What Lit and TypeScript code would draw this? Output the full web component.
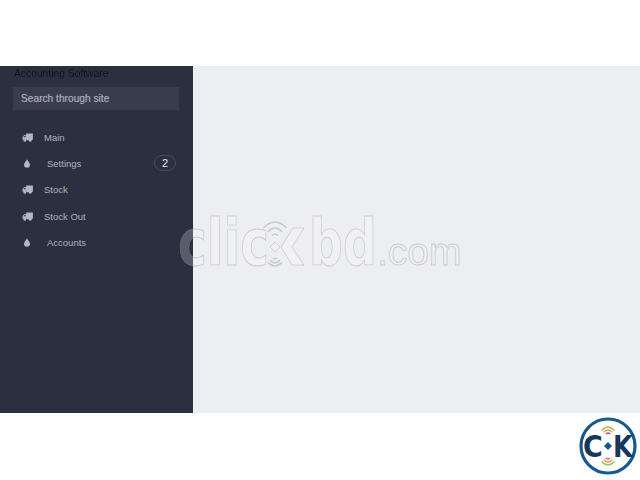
import { LitElement, html, css, svg } from 'lit'
import { customElement } from 'lit/decorators.js'

const truck = html`<svg class="icon" width="11" height="9" viewBox="0 0 12 10">
	<path fill="currentColor" d="M4.5 0.5H12V7.5H11V8H5V7.5H0.5V4.5L2.5 2.2H4.5ZM3 3L1.6 4.6H3.8V3Z" />
	<circle fill="currentColor" cx="3" cy="8.2" r="1.5" />
	<circle fill="currentColor" cx="9" cy="8.2" r="1.5" />
</svg>`

const drop = html`<svg class="icon" width="6" height="9" viewBox="0 0 7 10">
	<path fill="currentColor" d="M3.5 0C4 1.8 7 4 7 6.5A3.5 3.5 0 0 1 0 6.5C0 4 3 1.8 3.5 0Z" />
</svg>`

const arcs = (cx: number, cy: number, dir: number, radii: number[], colors: string[]) =>
	radii.map((r, i) => {
		const w = r * 0.72
		const h = r * 0.38
		return svg`<path fill="none" stroke=${colors[i % colors.length]} stroke-width="1.4" d="M${cx - w} ${cy + dir * (r - h)}Q${cx} ${cy + dir * (r + h)} ${cx + w} ${cy + dir * (r - h)}" />`
	})

@customElement('app-root')
export class AppRoot extends LitElement {
	static styles = css`
		:host {
			display: block;
			width: 640px;
			height: 480px;
			background: #fff;
			font-family: 'Liberation Sans', Arial, sans-serif;
			overflow: hidden;
		}

		.stage {
			position: relative;
			display: flex;
			height: 347px;
			margin-top: 66px;
		}

		aside {
			flex: none;
			width: 193px;
			padding: 0 14px 0 13px;
			box-sizing: border-box;
			background: #2b3040;
		}

		main {
			flex: 1;
			background: #edeef2;
		}

		h1 {
			margin: 2px 0 7px 1px;
			height: 12px;
			font-size: 10.3px;
			line-height: 12px;
			font-weight: 400;
			color: #0e1016;
			text-shadow: 0 0 1px #3c404e;
			filter: blur(0.3px);
		}

		.search {
			height: 23px;
			padding-left: 8px;
			background: #383c4c;
			font-size: 10.2px;
			line-height: 23px;
			color: #a9abb5;
			text-shadow: 0 0 1px #7c7f8b;
		}

		nav {
			display: flex;
			flex-direction: column;
			margin-top: 14px;
		}

		.item {
			display: flex;
			align-items: center;
			height: 26.3px;
			padding-left: 9px;
			font-size: 9.5px;
			color: #b0b2bb;
		}

		.icon {
			flex: none;
			color: #b4b6c0;
		}

		.truck span {
			margin-left: 11px;
		}

		.drop {
			padding-left: 11px;
		}

		.drop span {
			margin-left: 17px;
		}

		.badge {
			margin-left: auto;
			margin-right: 3px;
			width: 20px;
			height: 14px;
			border: 1px solid #464a5a;
			border-radius: 8px;
			font-size: 11px;
			line-height: 14px;
			text-align: center;
			color: #e8e9ee;
		}

		.watermark {
			position: absolute;
			left: 170px;
			top: 139px;
		}

		.watermark text {
			font-family: 'DejaVu Sans', sans-serif;
			font-weight: 700;
			font-size: 64px;
			fill: rgba(255, 255, 255, 0.22);
			stroke: rgba(140, 142, 152, 0.4);
			stroke-width: 0.9;
		}

		.watermark text.tld {
			font-family: 'Liberation Sans', Arial, sans-serif;
			font-weight: 400;
			font-size: 39px;
		}

		.watermark .mark {
			fill: rgba(255, 255, 255, 0.22);
			stroke: rgba(140, 142, 152, 0.4);
			stroke-width: 0.8;
		}

		footer {
			display: flex;
			justify-content: flex-end;
			height: 67px;
			padding: 3px 3px 0 0;
			box-sizing: border-box;
		}

		.logo text {
			font-family: 'DejaVu Sans', sans-serif;
			font-weight: 700;
			font-size: 30px;
			fill: #17365c;
		}
	`

	items = [
		{ label: 'Main', kind: 'truck' },
		{ label: 'Settings', kind: 'drop', badge: 2 },
		{ label: 'Stock', kind: 'truck' },
		{ label: 'Stock Out', kind: 'truck' },
		{ label: 'Accounts', kind: 'drop' },
	]

	render() {
		return html`
			<div class="stage">
				<aside>
					<h1>Accounting Software</h1>
					<div class="search">Search through site</div>
					<nav>
						${this.items.map(
							(it) => html`<div class="item ${it.kind}">
								${it.kind === 'truck' ? truck : drop}
								<span>${it.label}</span>
								${it.badge ? html`<div class="badge">${it.badge}</div>` : ''}
							</div>`
						)}
					</nav>
				</aside>
				<main></main>
				<svg class="watermark" width="300" height="84" viewBox="0 0 300 84">
					<text transform="translate(8 60) scale(0.76 1)">clic</text>
					<path class="mark" d="M105 37L110 42L105 47L100 42Z" />
					${arcs(105, 33, -1, [4, 10, 16], ['rgba(140, 142, 152, 0.4)'])}
					${arcs(105, 51, 1, [3, 7, 10], ['rgba(140, 142, 152, 0.4)'])}
					<path class="mark" d="M123 23H134L122 42L134 60H122L111 42Z" />
					<text transform="translate(139 60) scale(0.74 1)">bd</text>
					<text class="tld" x="207" y="60">.com</text>
				</svg>
			</div>
			<footer>
				<svg class="logo" width="60" height="60" viewBox="0 0 60 60">
					<circle cx="31" cy="30" r="27" fill="#fff" stroke="#17598c" stroke-width="3.2" />
					${arcs(31, 20, -1, [3, 6, 9], ['#c2527c', '#e0a04a', '#9dbb4e'])}
					${arcs(31, 40, 1, [3, 6, 9], ['#c2527c', '#e0a04a', '#9dbb4e'])}
					<text transform="translate(6 41) scale(0.9 1)">C</text>
					<path d="M31 26L35 30L31 34L27 30Z" fill="#17598c" />
					<text transform="translate(36 41) scale(0.85 1)">K</text>
				</svg>
			</footer>
		`
	}
}
